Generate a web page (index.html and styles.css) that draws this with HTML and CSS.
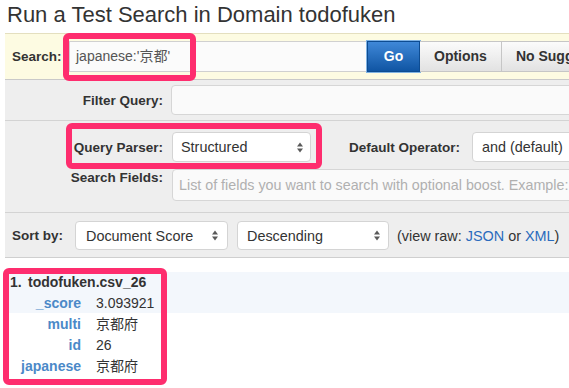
FILE: index.html
```html
<!DOCTYPE html>
<html>
<head>
<meta charset="utf-8">
<link rel="stylesheet" href="styles.css">
</head>
<body>
<div class="page">
  <h1 class="title">Run a Test Search in Domain todofuken</h1>

  <div class="search-bar">
    <span class="lbl search-lbl">Search:</span>
    <div class="input query">japanese:'京都'</div>
    <div class="btn go">Go</div>
    <div class="btn">Options</div>
    <div class="btn">No Suggestions</div>
  </div>

  <div class="panel">
    <div class="row r1">
      <span class="lbl col">Filter Query:</span>
      <div class="input grow"></div>
    </div>
    <div class="row r2">
      <div class="line">
        <span class="lbl col">Query Parser:</span>
        <div class="select sel-parser"><span>Structured</span><svg class="arr" width="6" height="11" viewBox="0 0 6 11"><path d="M0 4.5 L3 0.5 L6 4.5 Z M0 6.5 L3 10.5 L6 6.5 Z" fill="#5a5a5a"/></svg></div>
        <span class="lbl op">Default Operator:</span>
        <div class="select sel-op"><span>and (default)</span></div>
      </div>
      <div class="line fields">
        <span class="lbl col top">Search Fields:</span>
        <div class="input grow tall ph">List of fields you want to search with optional boost. Example:</div>
      </div>
    </div>
    <div class="row r3">
      <span class="lbl sort-lbl">Sort by:</span>
      <div class="select sel-sort"><span>Document Score</span><svg class="arr" width="6" height="11" viewBox="0 0 6 11"><path d="M0 4.5 L3 0.5 L6 4.5 Z M0 6.5 L3 10.5 L6 6.5 Z" fill="#5a5a5a"/></svg></div>
      <div class="select sel-dir"><span>Descending</span><svg class="arr" width="6" height="11" viewBox="0 0 6 11"><path d="M0 4.5 L3 0.5 L6 4.5 Z M0 6.5 L3 10.5 L6 6.5 Z" fill="#5a5a5a"/></svg></div>
      <span class="raw">(view raw: <span class="link">JSON</span> or <span class="link">XML</span>)</span>
    </div>
  </div>

  <div class="results">
    <div class="hit-head">
      <div class="hit-title"><span class="num">1.</span>todofuken.csv_26</div>
      <div class="field score"><span class="fname">_score</span><span class="fval">3.093921</span></div>
    </div>
    <div class="field first"><span class="fname">multi</span><span class="fval">京都府</span></div>
    <div class="field"><span class="fname">id</span><span class="fval">26</span></div>
    <div class="field"><span class="fname">japanese</span><span class="fval">京都府</span></div>
  </div>

  <div class="mark mark-search"></div>
  <div class="mark mark-parser"></div>
  <div class="mark mark-result"></div>
</div>
</body>
</html>
```

FILE: styles.css
```css
body {
  margin: 0;
  font-family: "Liberation Sans", Arial, "Noto Sans CJK JP", sans-serif;
  color: #333;
  background: #fff;
  overflow: hidden;
}

.page {
  position: relative;
  width: 760px;
  height: 388px;
}

.title {
  margin: 0 0 5px;
  padding: 2px 0 0 7px;
  font-size: 22px;
  line-height: 26px;
  font-weight: normal;
  color: #333;
  white-space: nowrap;
}

.lbl {
  font-size: 13.5px;
  font-weight: bold;
  color: #333;
  white-space: nowrap;
  flex: none;
}

/* search bar */
.search-bar {
  margin-left: 5px;
  display: flex;
  align-items: center;
  background: #fdfbe2;
  border-top: 1px solid #e4dfbf;
  border-bottom: 1px solid #c9c9c9;
  padding: 7px 0 7px 7px;
  height: 31px;
}

.search-lbl {
  width: 57px;
}

.input {
  box-sizing: border-box;
  border: 1px solid #d0d0d0;
  background: #fbfbfb;
  font-size: 14px;
  color: #555;
  white-space: nowrap;
  overflow: hidden;
}

.query {
  width: 298px;
  height: 31px;
  line-height: 29px;
  padding-left: 6px;
  flex: none;
}

.btn {
  box-sizing: border-box;
  height: 31px;
  line-height: 29px;
  padding: 0 14px;
  font-size: 14px;
  font-weight: bold;
  color: #333;
  background: linear-gradient(#fbfbfb, #e2e2e2);
  border: 1px solid #c6c6c6;
  border-left: none;
  white-space: nowrap;
  flex: none;
}

.btn.go {
  width: 53px;
  padding: 0;
  text-align: center;
  color: #fff;
  background: linear-gradient(#3f88d8, #1055a3);
  border: 1px solid #0d4c92;
  box-shadow: 0 0 0 1px #7fb2e3;
}

/* grey panel */
.panel {
  margin-left: 5px;
  background: #eeeeee;
  border-bottom: 1px solid #cfcfcf;
}

.row {
  border-bottom: 1px solid #d3d3d3;
}

.row:last-child {
  border-bottom: none;
}

.r1 {
  display: flex;
  align-items: center;
  padding: 5px 0;
}

.col {
  width: 158px;
  margin-right: 8px;
  text-align: right;
}

.grow {
  flex: 1;
  height: 30px;
  border-radius: 4px;
  background: #fafafa;
  border-color: #d6d6d6;
}

.r2 {
  display: flex;
  flex-direction: column;
  gap: 7px;
  padding: 11px 0;
}

.line {
  display: flex;
  align-items: center;
}

.line.fields {
  align-items: flex-start;
}

.col.top {
  padding-top: 1px;
}

.tall {
  height: 32px;
  line-height: 30px;
  padding-left: 6px;
  margin-left: 1px;
  font-size: 14.3px;
}

.ph {
  color: #b0b0b0;
}

.select {
  box-sizing: border-box;
  display: flex;
  align-items: center;
  height: 30px;
  padding: 0 7px 0 8px;
  background: #fff;
  border: 1px solid #d4d4d4;
  border-radius: 4px;
  font-size: 14.4px;
  color: #333;
  white-space: nowrap;
  flex: none;
}

.select .arr {
  margin-left: auto;
}

.sel-parser {
  width: 139px;
  margin-left: 1px;
}

.op {
  width: 116px;
  margin-left: 38px;
  margin-right: 7px;
}

.sel-op {
  width: 160px;
  padding-left: 9px;
}

.r3 {
  display: flex;
  align-items: center;
  padding: 8px 0 7px 7px;
}

.sort-lbl {
  width: 63px;
}

.sel-sort {
  width: 153px;
  height: 29px;
  padding-left: 10px;
  padding-right: 9px;
}

.sel-dir {
  width: 152px;
  height: 29px;
  margin-left: 9px;
  padding-left: 9px;
  padding-right: 8px;
}

.raw {
  margin-left: 8px;
  font-size: 14.4px;
  color: #333;
  white-space: nowrap;
}

.link {
  color: #2a6bbd;
}

/* results */
.results {
  margin-top: 14px;
  margin-left: 5px;
  font-size: 14px;
}

.hit-head {
  background: #f3f7fc;
}

.hit-title {
  display: flex;
  padding-left: 5px;
  line-height: 21px;
  font-weight: bold;
  color: #333;
}

.num {
  width: 18px;
}

.field {
  display: flex;
  line-height: 21px;
}

.field.score {
  line-height: 20px;
}

.field.first {
  margin-top: 1px;
}

.fname {
  width: 76px;
  text-align: right;
  font-weight: bold;
  color: #4b89c8;
  flex: none;
}

.fval {
  margin-left: 15px;
  color: #333;
}

/* annotation marks */
.mark {
  position: absolute;
  box-sizing: border-box;
  border: 6px solid #fe2d6e;
  border-radius: 6px;
}

.mark-search {
  left: 63px;
  top: 33px;
  width: 133px;
  height: 48px;
}

.mark-parser {
  left: 66px;
  top: 123px;
  width: 256px;
  height: 46px;
}

.mark-result {
  left: 3px;
  top: 268px;
  width: 164px;
  height: 117px;
}
```
